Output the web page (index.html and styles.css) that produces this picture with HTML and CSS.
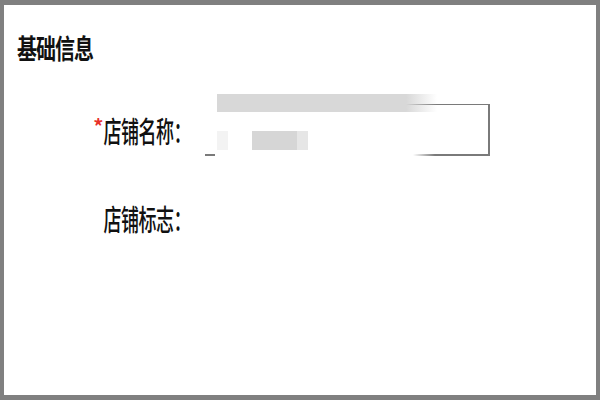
FILE: index.html
```html
<!DOCTYPE html>
<html lang="zh-CN">
<head>
<meta charset="utf-8">
<title>基础信息</title>
<link rel="stylesheet" href="styles.css">
</head>
<body>
<div class="frame">
  <h1 class="title"><span class="stretch">基础信息</span></h1>
  <div class="form">
    <div class="row row-name">
      <label class="label"><span class="req">*</span><span class="stretch">店铺名称：</span></label>
      <div class="input">
        <span class="bar"></span>
        <span class="mask-top"></span>
        <span class="mask-bottom"></span>
        <span class="faint"></span>
        <span class="block"></span>
        <span class="block-light"></span>
      </div>
    </div>
    <div class="row row-logo">
      <label class="label"><span class="stretch">店铺标志：</span></label>
    </div>
  </div>
</div>
</body>
</html>
```

FILE: styles.css
```css
html, body {
  margin: 0;
  padding: 0;
  background: #ffffff;
}
.frame {
  width: 600px;
  height: 400px;
  box-sizing: border-box;
  border-style: solid;
  border-color: #808080;
  border-width: 5px 4px;
  background: #ffffff;
  font-family: "Noto Sans CJK SC", "Noto Sans", sans-serif;
  color: #111111;
  padding-top: 29px;
}
.stretch {
  display: inline-block;
}
.title {
  margin: 0 0 0 13px;
  font-size: 20px;
  font-weight: 700;
  line-height: 28px;
  height: 28px;
}
.title .stretch {
  transform: scaleY(1.35);
  letter-spacing: -1px;
}
.form {
  margin-top: 42px;
}
.row {
  display: flex;
  align-items: center;
}
.label {
  width: 174px;
  text-align: right;
  font-size: 18px;
  font-weight: 500;
  line-height: 30px;
  white-space: nowrap;
}
.label .stretch {
  transform: scaleY(1.62);
  margin-right: -13px;
  letter-spacing: -0.5px;
}
.req {
  color: #e8302a;
  font-size: 20px;
  font-weight: 700;
  vertical-align: top;
  line-height: 22px;
  margin-right: 0;
}
.input {
  position: relative;
  margin-left: 27px;
  width: 283px;
  height: 49px;
  border-top: 1px solid #7a7a7a;
  border-right: 2px solid #7a7a7a;
  border-bottom: 2px solid #7a7a7a;
}
.bar {
  position: absolute;
  left: 12px;
  top: -11px;
  width: 220px;
  height: 18px;
  background: linear-gradient(to right, #d8d8d8 0, #d8d8d8 86%, rgba(216, 216, 216, 0) 100%);
}
.mask-top {
  position: absolute;
  left: -2px;
  top: -2px;
  width: 14px;
  height: 4px;
  background: #ffffff;
}
.mask-bottom {
  position: absolute;
  left: 10px;
  bottom: -3px;
  width: 220px;
  height: 4px;
  background: linear-gradient(to right, #ffffff 0, #ffffff 90%, rgba(255, 255, 255, 0) 100%);
}
.faint {
  position: absolute;
  left: 12px;
  top: 26px;
  width: 11px;
  height: 19px;
  background: #f3f3f3;
}
.block {
  position: absolute;
  left: 47px;
  top: 26px;
  width: 45px;
  height: 19px;
  background: #d6d6d6;
}
.block-light {
  position: absolute;
  left: 92px;
  top: 26px;
  width: 11px;
  height: 19px;
  background: #e6e6e6;
}
.row-logo {
  margin-top: 47px;
}
```
